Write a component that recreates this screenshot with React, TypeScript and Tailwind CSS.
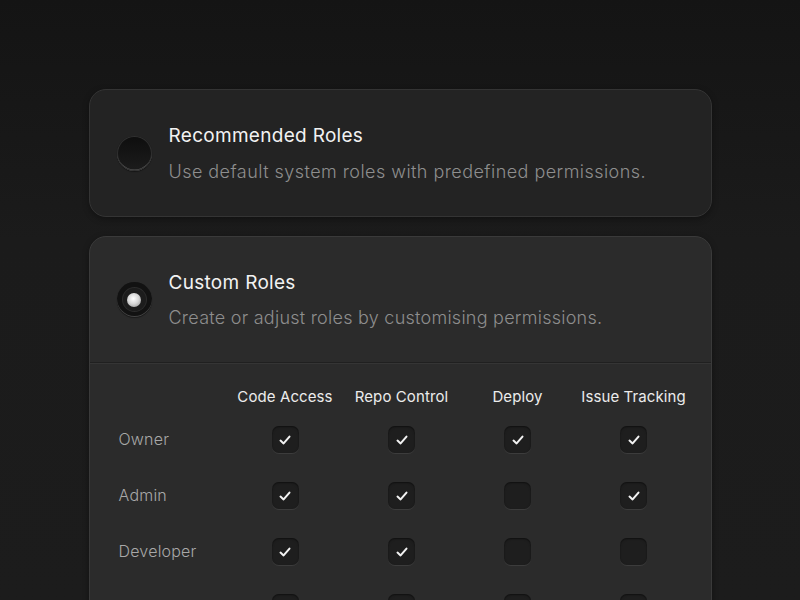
import React from "react";

const font = { fontFamily: "Inter, 'Noto Sans', sans-serif" };

function Radio({ selected }: { selected?: boolean }) {
  if (!selected) {
    return (
      <div className="w-[35px] h-[35px] rounded-full shrink-0 bg-[linear-gradient(180deg,#0e0e0e,#1c1c1c)] shadow-[inset_0_0_0_1px_#303030,inset_0_-1.5px_0_#5a5a5a,0_1px_1px_rgba(0,0,0,0.4)]" />
    );
  }
  return (
    <div className="w-[35px] h-[35px] rounded-full shrink-0 flex items-center justify-center bg-[#121212] shadow-[inset_0_-1px_0_#444,0_1px_1px_rgba(0,0,0,0.4)]">
      <div className="w-[23px] h-[23px] rounded-full flex items-center justify-center bg-[#1c1c1c] shadow-[0_0_0_1px_#2c2c2c]">
        <div className="w-[14px] h-[14px] rounded-full bg-[radial-gradient(circle_at_45%_40%,#ffffff_0%,#d8d8d8_45%,#8a8a8a_100%)]" />
      </div>
    </div>
  );
}

function Check({ on }: { on: boolean }) {
  return (
    <div className="w-[27px] h-[27px] rounded-[7px] bg-[#1e1e1e] shadow-[inset_0_1px_2px_rgba(0,0,0,0.5),0_1px_0_#3c3c3c] flex items-center justify-center">
      {on && (
        <svg width="14" height="14" viewBox="0 0 14 14" fill="none">
          <path d="M2.5 7.6 L5.6 10.4 L11.5 3.6" stroke="#f2f2f2" strokeWidth="2" strokeLinecap="round" strokeLinejoin="round" />
        </svg>
      )}
    </div>
  );
}

const cols = ["Code Access", "Repo Control", "Deploy", "Issue Tracking"];
const rows: { name: string; v: boolean[] }[] = [
  { name: "Owner", v: [true, true, true, true] },
  { name: "Admin", v: [true, true, false, true] },
  { name: "Developer", v: [true, true, false, false] },
  { name: "", v: [true, false, false, false] },
];

export default function App() {
  return (
    <div
      style={font}
      className="w-[800px] h-[600px] overflow-hidden bg-[linear-gradient(180deg,#141414_0%,#1b1b1b_40%,#1c1c1c_100%)] flex flex-col items-center pt-[89px]"
    >
      <div className="w-[623px] flex flex-col gap-[19px]">
        <div className="h-[128px] rounded-[17px] bg-[#232323] border border-[#343434] shadow-[0_2px_6px_rgba(0,0,0,0.35)] flex items-center pl-[27px] pt-[1px]">
          <Radio />
          <div className="ml-[17px] flex flex-col">
            <div className="text-[19px] leading-[24px] text-[#f2f2f2] tracking-[0.3px]">Recommended Roles</div>
            <div className="mt-[13px] text-[18px] leading-[22px] font-light text-[#8e8e8e] tracking-[0.45px]">
              Use default system roles with predefined permissions.
            </div>
          </div>
        </div>

        <div className="rounded-t-[17px] bg-[#2b2b2b] border border-[#3a3a3a] shadow-[0_2px_6px_rgba(0,0,0,0.35)] h-[400px]">
          <div className="h-[125px] flex items-center pl-[27px]">
            <Radio selected />
            <div className="ml-[17px] flex flex-col">
              <div className="text-[19px] leading-[24px] text-[#f2f2f2] tracking-[0.3px]">Custom Roles</div>
              <div className="mt-[12px] text-[18px] leading-[22px] font-light text-[#8e8e8e] tracking-[0.25px]">
                Create or adjust roles by customising permissions.
              </div>
            </div>
          </div>
          <div className="h-px bg-[#202020] shadow-[0_1px_0_#353535]" />
          <div className="pl-[28px] pt-[23px]">
            <div className="grid grid-cols-[109px_117px_116px_116px_116px] items-center">
              <div className="h-[22px]" />
              {cols.map((c) => (
                <div key={c} className="text-center text-[15px] leading-[22px] text-[#ececec] whitespace-nowrap tracking-[0.1px]">
                  {c}
                </div>
              ))}
            </div>
            <div className="flex flex-col mt-[18px] gap-[29px]">
              {rows.map((r, idx) => (
                <div key={idx} className="grid grid-cols-[109px_117px_116px_116px_116px] items-center">
                  <div className="pl-[1px] text-[16px] leading-[27px] font-light text-[#a8a8a8] tracking-[0.2px]">{r.name}</div>
                  {r.v.map((on, i) => (
                    <div key={i} className="flex justify-center">
                      <Check on={on} />
                    </div>
                  ))}
                </div>
              ))}
            </div>
          </div>
        </div>
      </div>
    </div>
  );
}
